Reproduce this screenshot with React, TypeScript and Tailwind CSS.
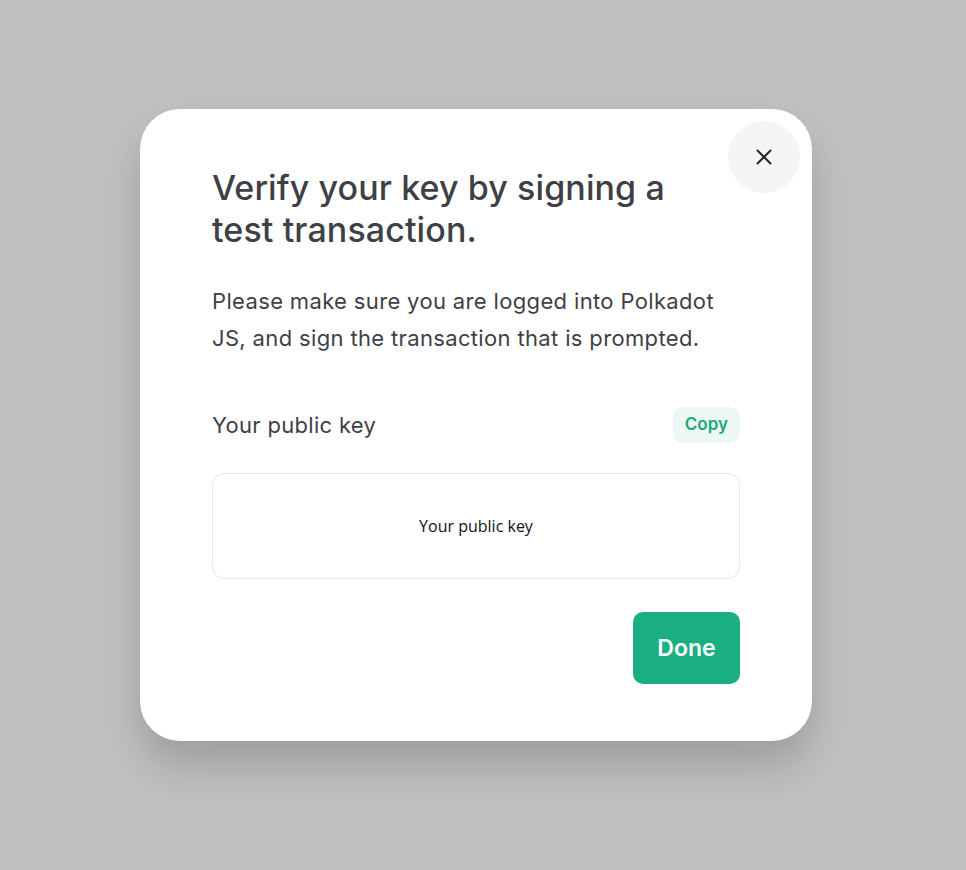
import { X } from "lucide-react";

export default function App() {
  return (
    <div className="flex min-h-[870px] w-full items-start justify-center bg-[#c0c0c2] pr-[14px] pt-[109px] font-['Inter',sans-serif]">
      <div className="relative w-[672px] rounded-[40px] bg-white px-[72px] pb-[57px] pt-[58px] shadow-[0_24px_40px_rgba(0,0,0,0.18)]">
        <button className="absolute right-[12px] top-[12px] flex h-[72px] w-[72px] items-center justify-center rounded-full bg-[#f5f4f6] text-[#27272a]">
          <X size={26} strokeWidth={1.8} />
        </button>

        <h1 className="text-[34px] font-medium leading-[42px] tracking-[0.1px] text-[#3f3f46]">
          Verify your key by signing a
          <br />
          test transaction.
        </h1>

        <p className="mt-[32px] text-[22px] leading-[37px] tracking-[0.35px] text-[#3f3f46]">
          Please make sure you are logged into Polkadot JS, and sign the
          transaction that is prompted.
        </p>

        <div className="mt-[50px] flex items-center justify-between">
          <span className="text-[22px] tracking-[0.3px] text-[#3f3f46]">Your public key</span>
          <button className="h-[36px] rounded-[10px] bg-[#edf8f4] px-[12px] text-[17px] font-semibold text-[#1aa97a]">
            Copy
          </button>
        </div>

        <div className="mt-[30px] flex h-[106px] items-center justify-center rounded-[12px] border border-[#e8e8ea]">
          <span className="font-['Open_Sans',sans-serif] text-[16px] text-[#111]">
            Your public key
          </span>
        </div>

        <div className="mt-[33px] flex justify-end">
          <button className="h-[72px] w-[107px] rounded-[10px] bg-[#1aaf83] text-[23px] font-semibold text-white">
            Done
          </button>
        </div>
      </div>
    </div>
  );
}
